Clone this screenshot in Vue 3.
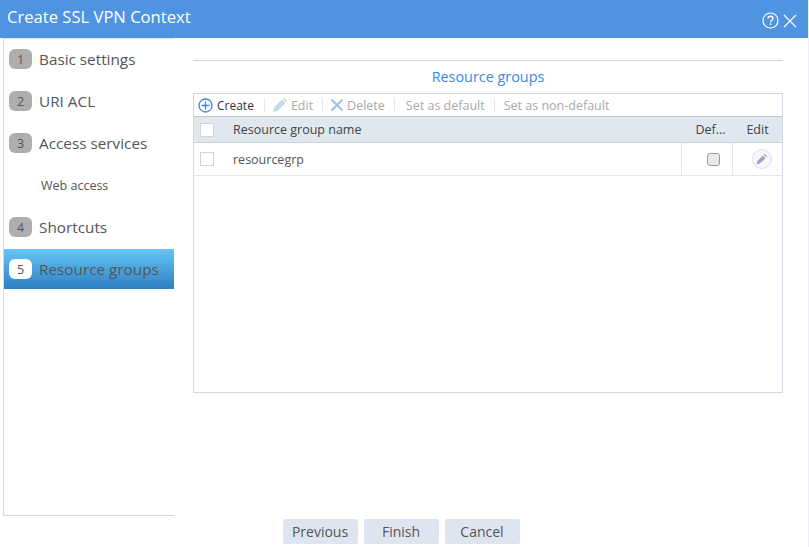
<script setup>
const steps = [
  { n: 1, label: 'Basic settings' },
  { n: 2, label: 'URI ACL' },
  { n: 3, label: 'Access services' },
  { label: 'Web access', sub: true },
  { n: 4, label: 'Shortcuts' },
  { n: 5, label: 'Resource groups', active: true }
]
</script>

<template>
  <div class="dialog">
    <header class="head">
      <span class="title">Create SSL VPN Context</span>
      <span class="head-icons">
        <svg width="17" height="17" viewBox="0 0 17 17" fill="none" stroke="#fff">
          <circle cx="8.5" cy="8.5" r="7.5" stroke-width="1.2" />
          <path d="M6 6.6c0-1.5 1.1-2.4 2.5-2.4s2.5.9 2.5 2.2c0 1.9-2.5 1.9-2.5 3.9" stroke-width="1.4" />
          <path d="M8.5 11.4v1.6" stroke-width="1.5" />
        </svg>
        <svg width="14" height="14" viewBox="0 0 14 14" fill="none" stroke="#fff" stroke-width="1.2">
          <path d="M1 1l12 12M13 1L1 13" />
        </svg>
      </span>
    </header>
    <div class="body">
      <nav class="side">
        <div v-for="s in steps" :key="s.label" class="step" :class="{ sub: s.sub, active: s.active }">
          <span v-if="s.n" class="num">{{ s.n }}</span>
          <span>{{ s.label }}</span>
        </div>
      </nav>
      <main class="main">
        <div class="section-title">Resource groups</div>
        <div class="grid">
          <div class="toolbar">
            <span class="tool on">
              <svg width="15" height="15" viewBox="0 0 15 15" fill="none" stroke="#3f83d8" stroke-width="1.3">
                <circle cx="7.5" cy="7.5" r="6.5" />
                <path d="M7.5 3.5v8M3.5 7.5h8" />
              </svg>
              Create
            </span>
            <i class="sep wide"></i>
            <span class="tool">
              <svg width="16" height="16" viewBox="0 0 15 15" fill="#c3d6ec">
                <path d="M1 14l1-4.2 7.4-7.4 3.2 3.2-7.4 7.4zM10.2 1.6l.9-.9 3.2 3.2-.9.9z" />
              </svg>
              Edit
            </span>
            <i class="sep"></i>
            <span class="tool">
              <svg width="14" height="14" viewBox="0 0 14 14" fill="none" stroke="#9dc0e6" stroke-width="2">
                <path d="M1.5 1.5l11 11M12.5 1.5l-11 11" />
              </svg>
              Delete
            </span>
            <i class="sep"></i>
            <span class="tool first-plain">Set as default</span>
            <i class="sep"></i>
            <span class="tool plain">Set as non-default</span>
          </div>
          <div class="row hrow">
            <div class="c-check"><span class="box"></span></div>
            <div class="c-name">Resource group name</div>
            <div class="c-def">Def...</div>
            <div class="c-edit">Edit</div>
          </div>
          <div class="row drow">
            <div class="c-check"><span class="box"></span></div>
            <div class="c-name">resourcegrp</div>
            <div class="c-def line"><span class="native"></span></div>
            <div class="c-edit line">
              <span class="pen">
                <svg width="12" height="12" viewBox="0 0 11 11" fill="#9aa3c0">
                  <path d="M.6 10.4l.7-3 5-5 2.3 2.3-5 5zM7 1.6l.8-.8 2.4 2.4-.8.8z" />
                </svg>
              </span>
            </div>
          </div>
        </div>
      </main>
    </div>
    <footer class="foot">
      <button class="btn">Previous</button>
      <button class="btn">Finish</button>
      <button class="btn">Cancel</button>
    </footer>
  </div>
</template>

<style scoped>
.dialog {
  width: 808px;
  height: 547px;
  border-right: 1px solid #eef0f6;
  background: #fff;
  display: flex;
  flex-direction: column;
  font-family: "Open Sans", "Noto Sans", sans-serif;
  color: #444;
}
.head {
  height: 38px;
  flex: none;
  background: #4f94e0;
  color: #fff;
  display: flex;
  align-items: center;
  justify-content: space-between;
  padding: 0 11px 5px 7px;
  box-sizing: border-box;
}
.title { font-size: 16.6px; }
.head-icons { display: flex; align-items: center; gap: 4px; padding-top: 8px; }
.body { display: flex; height: 478px; flex: none; }
.side {
  width: 170px;
  margin-left: 3px;
  border: 1px solid #d6d6e4;
  border-top-color: #e4e6ee;
  border-right: 0;
  height: 476px;
  flex: none;
}
.step {
  height: 42px;
  display: flex;
  align-items: center;
  gap: 7px;
  padding-left: 5px;
  font-size: 15.3px;
  color: #555;
  box-sizing: border-box;
}
.step:first-child { height: 41px; padding-bottom: 1px; }
.step.sub { font-size: 12.5px; padding-left: 37px; }
.step.active {
  height: 40px;
  margin-top: 1px;
  background: linear-gradient(#66c6f6, #2e7fc4);
}
.num {
  width: 23px;
  height: 20px;
  border-radius: 6px;
  background: #aeaeae;
  color: #555;
  font-size: 12.5px;
  display: flex;
  align-items: center;
  justify-content: center;
  flex: none;
}
.active .num { background: #fff; }
.main { flex: 1; padding: 22px 25px 0 19px; min-width: 0; }
.section-title {
  border-top: 1px solid #c9d6e4;
  height: 32px;
  line-height: 32px;
  text-align: center;
  font-size: 14.4px;
  color: #3a87ea;
}
.grid {
  height: 298px;
  border: 1px solid #d4d7e8;
}
.toolbar {
  height: 22px;
  display: flex;
  align-items: center;
  padding-left: 4px;
  font-size: 12.5px;
  color: #a8a8a8;
}
.tool { display: flex; align-items: center; gap: 3px; white-space: nowrap; }
.tool.on { color: #333; font-size: 12px; gap: 4px; }
.tool.first-plain { padding-left: 4px; }
.tool.plain { padding-left: 2px; }
.sep { width: 1px; height: 14px; background: #e8e8e8; margin: 0 7px 0 9px; }
.sep.wide { margin-left: 10px; }
.row { display: flex; font-size: 12.5px; }
.hrow {
  height: 25px;
  background: #e1e7ee;
  border-top: 1px solid #c4c4c4;
  border-bottom: 1px solid #ccd2da;
  color: #444;
}
.drow { height: 32px; border-bottom: 1px solid #e6e6e6; color: #555; }
.row > div { display: flex; align-items: center; }
.c-check { width: 39px; padding-left: 6px; box-sizing: border-box; flex: none; }
.box { width: 12px; height: 12px; border: 1px solid #d4d4d4; background: #fff; }
.c-name { flex: 1; }
.c-def { width: 51px; flex: none; justify-content: center; box-sizing: border-box; }
.c-edit { width: 50px; flex: none; justify-content: center; box-sizing: border-box; }
.hrow .c-def { padding-left: 8px; }
.hrow .c-edit { padding-left: 1px; }
.line { border-left: 1px solid #e6e6e6; }
.drow .c-def { padding-left: 12px; }
.drow .c-edit { padding-left: 8px; }
.native {
  width: 11px;
  height: 11px;
  border: 1px solid #9a9a9a;
  border-radius: 3px;
  background: #e9e9e9;
}
.pen {
  width: 18px;
  height: 18px;
  border: 1px solid #dcdfe8;
  border-radius: 50%;
  display: flex;
  align-items: center;
  justify-content: center;
  background: #f6f7fa;
}
.foot {
  display: flex;
  justify-content: center;
  gap: 6px;
  padding: 3px 0 0 0;
  margin-right: 6px;
}
.btn {
  width: 75px;
  height: 25px;
  border: 0;
  padding: 0;
  border-radius: 2px;
  background: #dfe5f0;
  color: #555;
  font-family: inherit;
  font-size: 14px;
}
</style>
